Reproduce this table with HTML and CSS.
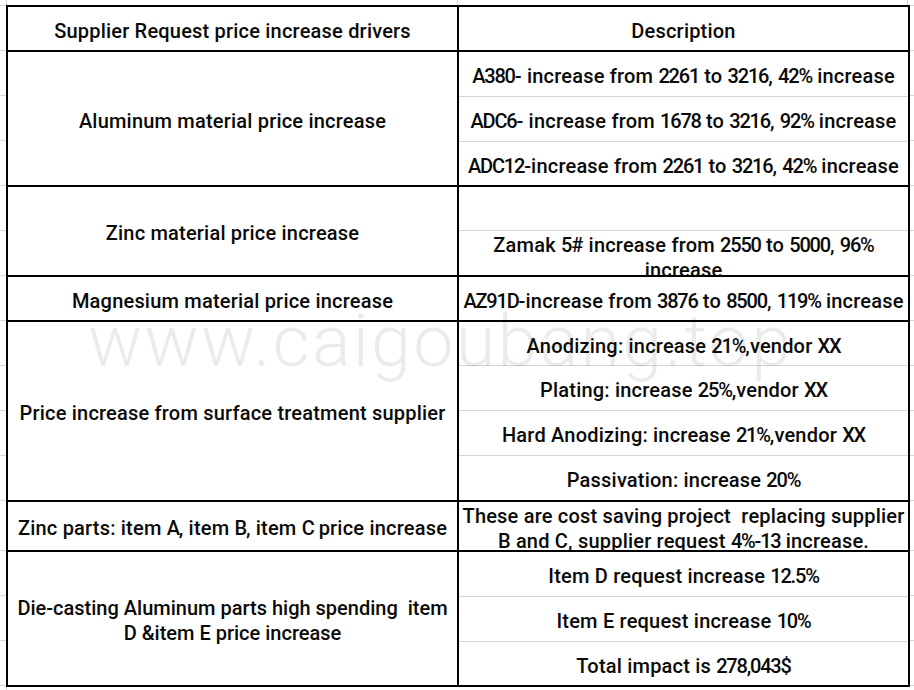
FILE: index.html
```html
<!DOCTYPE html>
<html lang="en">
<head>
<meta charset="utf-8">
<title>Supplier Request price increase drivers</title>
<link rel="stylesheet" href="styles.css">
</head>
<body>
<div class="sheet">
  <div class="grp">
    <div class="lcell"><span class="t">Supplier Request price increase drivers</span></div>
    <div class="rcol">
      <div class="sub h43"><span class="t">Description</span></div>
    </div>
  </div>
  <div class="grp">
    <div class="lcell"><span class="t">Aluminum material price increase</span></div>
    <div class="rcol">
      <div class="sub h44"><span class="t"><span class="n">A380</span>- increase from <span class="n">2261</span> to <span class="n">3216</span>, <span class="n">42%</span> increase</span></div>
      <div class="sub h45"><span class="t"><span class="n">ADC6</span>- increase from <span class="n">1678</span> to <span class="n">3216</span>, <span class="n">92%</span> increase</span></div>
      <div class="sub h44"><span class="t"><span class="n">ADC12</span>-increase from <span class="n">2261</span> to <span class="n">3216</span>, <span class="n">42%</span> increase</span></div>
    </div>
  </div>
  <div class="grp">
    <div class="lcell"><span class="t">Zinc material price increase</span></div>
    <div class="rcol">
      <div class="sub h43"></div>
      <div class="sub h45 clip"><span class="t">Zamak <span class="n">5</span># increase from <span class="n">2550</span> to <span class="n">5000</span>, <span class="n">96%</span><br>increase</span></div>
    </div>
  </div>
  <div class="grp">
    <div class="lcell"><span class="t">Magnesium material price increase</span></div>
    <div class="rcol">
      <div class="sub h43"><span class="t"><span class="n">AZ91D</span>-increase from <span class="n">3876</span> to <span class="n">8500</span>, <span class="n">119%</span> increase</span></div>
    </div>
  </div>
  <div class="grp">
    <div class="lcell"><span class="t">Price increase from surface treatment supplier</span></div>
    <div class="rcol">
      <div class="sub h43"><span class="t">Anodizing: increase <span class="n">21%</span>,vendor <span class="n">XX</span></span></div>
      <div class="sub h45"><span class="t">Plating: increase <span class="n">25%</span>,vendor <span class="n">XX</span></span></div>
      <div class="sub h45"><span class="t">Hard Anodizing: increase <span class="n">21%</span>,vendor <span class="n">XX</span></span></div>
      <div class="sub h45"><span class="t">Passivation: increase <span class="n">20%</span></span></div>
    </div>
  </div>
  <div class="grp">
    <div class="lcell"><span class="t">Zinc parts: item <span class="n">A</span>, item <span class="n">B</span>, item <span class="n">C</span> price increase</span></div>
    <div class="rcol">
      <div class="sub h48"><span class="t">These are cost saving project  replacing supplier<br>B and C, supplier request <span class="n">4%-13</span> increase.</span></div>
    </div>
  </div>
  <div class="grp">
    <div class="lcell"><span class="t tight">Die-casting Aluminum parts high spending  item<br>D &amp;item E price increase</span></div>
    <div class="rcol">
      <div class="sub h44"><span class="t">Item D request increase <span class="n">12.5%</span></span></div>
      <div class="sub h45"><span class="t">Item E request increase <span class="n">10%</span></span></div>
      <div class="sub h44"><span class="t">Total impact is <span class="n">278,043$</span></span></div>
    </div>
  </div>
</div>
<div class="watermark">www.caigoubang.top</div>
</body>
</html>
```
FILE: styles.css
```css
html, body {
  margin: 0;
  padding: 0;
}
body {
  width: 914px;
  height: 690px;
  overflow: hidden;
  position: relative;
  background-color: #fff;
  background-image:
    linear-gradient(to right, transparent 6px, #d6d6d6 6px 7px, transparent 7px 457px, #d6d6d6 457px 458px, transparent 458px 907px, #d6d6d6 907px 908px, transparent 908px),
    linear-gradient(to right, transparent 6px, #d6d6d6 6px 7px, transparent 7px),
    repeating-linear-gradient(to bottom, #d6d6d6 0 1px, transparent 1px 45px),
    repeating-linear-gradient(to bottom, #d6d6d6 0 1px, transparent 1px 45px);
  background-size: 100% 5px, 100% 4px, 100% 496px, 100% 140px;
  background-position: 0 0, 0 687px, 0 5px, 0 550px;
  background-repeat: no-repeat;
  font-family: Roboto, "Liberation Sans", Arial, sans-serif;
  color: #0a0a0a;
}
.sheet {
  margin: 5px 0 0 6px;
  width: 904px;
  box-sizing: border-box;
  border: 2px solid #000;
  background: #fff;
}
.grp {
  display: flex;
  border-top: 2px solid #000;
}
.grp:first-child {
  border-top: 0;
}
.lcell {
  width: 449px;
  flex: none;
  border-right: 2px solid #000;
  box-sizing: content-box;
  display: flex;
  align-items: center;
  justify-content: center;
  padding-top: 5px;
}
.rcol {
  width: 449px;
  flex: none;
  display: flex;
  flex-direction: column;
}
.sub {
  box-sizing: border-box;
  display: flex;
  align-items: center;
  justify-content: center;
  padding-top: 5px;
}
.sub + .sub {
  border-top: 1px solid #d6d6d6;
}
.h43 { height: 43px; }
.h44 { height: 44px; }
.h45 { height: 45px; }
.h48 { height: 48px; }
.clip {
  overflow: hidden;
  padding-top: 9px;
}
.t {
  display: block;
  text-align: center;
  white-space: pre;
  font-size: 20px;
  font-weight: 500;
  line-height: 25px;
  letter-spacing: 0.2px;
}
.t.tight {
  letter-spacing: 0;
}
.n {
  letter-spacing: -1.2px;
}
.watermark {
  position: absolute;
  left: 88px;
  top: 306px;
  font-family: Roboto, "Liberation Sans", Arial, sans-serif;
  font-weight: 300;
  font-size: 72px;
  line-height: 72px;
  letter-spacing: 2.2px;
  color: rgba(0, 0, 0, 0.08);
  pointer-events: none;
  white-space: nowrap;
}
```
